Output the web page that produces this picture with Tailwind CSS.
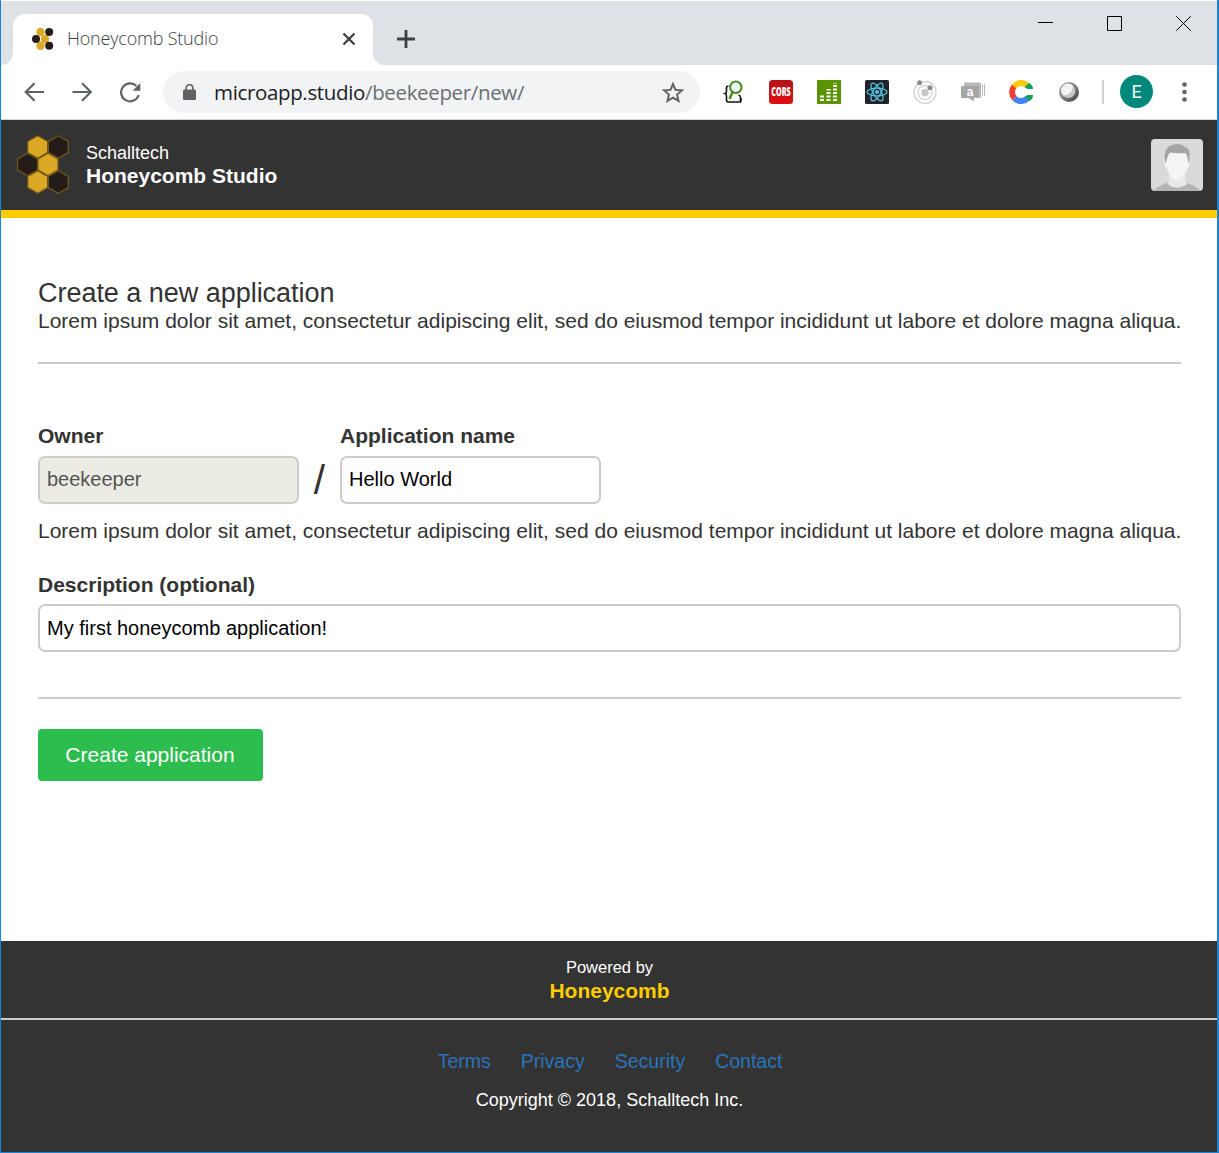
<!DOCTYPE html>
<html lang="en">
<head>
<meta charset="utf-8">
<title>Honeycomb Studio</title>
<script src="https://cdn.jsdelivr.net/npm/@tailwindcss/browser@4"></script>
</head>
<body class="bg-white">
<svg class="hidden">
  <defs>
    <symbol id="comb" viewBox="0 0 52 60">
      <g stroke="#725719" stroke-width="1.3">
        <path fill="#dca927" d="M20.7 .8 30.7 6.5V17.5L20.7 23.2 10.7 17.5V6.5z"/>
        <path fill="#231c19" d="M41.3 .8 51.3 6.5V17.5L41.3 23.2 31.3 17.5V6.5z"/>
        <path fill="#231c19" d="M10.6 18.3 20.6 24V35L10.6 40.7 .6 35V24z"/>
        <path fill="#dca927" d="M31 18.3 41 24V35L31 40.7 21 35V24z"/>
        <path fill="#dca927" d="M20.7 35.8 30.7 41.5V52.5L20.7 58.2 10.7 52.5V41.5z"/>
        <path fill="#231c19" d="M41.3 35.8 51.3 41.5V52.5L41.3 58.2 31.3 52.5V41.5z"/>
      </g>
    </symbol>
  </defs>
</svg>
<div class="flex h-[1153px] w-[1219px] flex-col overflow-hidden border-r-2 border-b border-l border-[#1883d7] bg-white pt-px font-['Liberation_Sans',Arial,sans-serif] text-[21px] leading-[28px] text-[#333]">

  <!-- Tab strip -->
  <div class="flex h-16 shrink-0 items-end bg-[#dee1e6]">
    <div class="h-3 w-3 bg-white"><div class="h-3 w-3 rounded-br-xl bg-[#dee1e6]"></div></div>
    <div class="flex h-[51px] w-[360px] items-center rounded-t-xl bg-white pr-[17px] pb-[2px] pl-[18px]">
      <svg class="h-6 w-6 shrink-0" viewBox="0 0 24 24">
        <g fill="#dca927"><circle cx="9.5" cy="5" r="4.2"/><circle cx="14" cy="12" r="4.2"/><circle cx="9.5" cy="18.7" r="4.2"/></g>
        <g fill="#231c19"><circle cx="18.2" cy="5" r="4"/><circle cx="5" cy="12" r="4"/><circle cx="18.2" cy="18.7" r="4"/></g>
      </svg>
      <span class="ml-3 flex-1 pb-[2px] font-['Open_Sans','Noto_Sans',sans-serif] text-[18px] font-[350] tracking-[-0.2px] whitespace-nowrap text-[#3c4043]">Honeycomb Studio</span>
      <svg class="h-[14px] w-[14px]" viewBox="0 0 14 14"><path d="M1.5 1.5 12.5 12.5M12.5 1.5 1.5 12.5" stroke="#3c4043" stroke-width="2.3"/></svg>
    </div>
    <div class="h-3 w-3 bg-white"><div class="h-3 w-3 rounded-bl-xl bg-[#dee1e6]"></div></div>
    <svg class="mb-[17px] ml-3 h-[18px] w-[18px]" viewBox="0 0 18 18"><path d="M9 0V18M0 9H18" stroke="#3c4043" stroke-width="2.8"/></svg>
    <div class="ml-auto flex h-16 items-start gap-[54px] pt-[15px] pr-[26px]">
      <svg class="h-[15px] w-[15px]" viewBox="0 0 15 15"><path d="M0 6.5H15" stroke="#000"/></svg>
      <svg class="h-[15px] w-[15px]" viewBox="0 0 15 15"><path d="M.5 .5H14.5V14.5H.5z" fill="none" stroke="#000"/></svg>
      <svg class="h-[15px] w-[15px]" viewBox="0 0 15 15"><path d="M.3 .3 14.7 14.7M14.7 .3 .3 14.7" stroke="#000"/></svg>
    </div>
  </div>

  <!-- Toolbar -->
  <div class="flex h-[55px] shrink-0 items-center border-b border-[#d2d4d6] bg-white pl-[22px]">
    <svg class="mb-px h-5 w-[22px]" viewBox="0 0 22 20" fill="none" stroke="#5f6368" stroke-width="2.2"><path d="M21 10H2.5M11.500 1.2 2.700 10 11.500 18.8"/></svg>
    <svg class="mb-px ml-[26px] h-5 w-[22px]" viewBox="0 0 22 20" fill="none" stroke="#5f6368" stroke-width="2.2"><path d="M1.5 10H19.5M11 1.2 19.8 10 11 18.8"/></svg>
    <svg class="mb-px ml-[26px] h-[22px] w-[22px]" viewBox="0 0 22 22"><path d="M19.700 14A9 9 0 1 1 17.5 5" fill="none" stroke="#5f6368" stroke-width="2.2"/><path d="M21.3 2V9.8H13.500z" fill="#5f6368"/></svg>
    <div class="ml-[22px] flex h-[42px] w-[537px] items-center rounded-full bg-[#f1f3f4] pr-[15px] pl-5">
      <svg class="h-4 w-[13px]" viewBox="0 0 13 16"><rect y="5.5" width="13" height="10.5" rx="1.5" fill="#5f6368"/><path d="M3.2 6V4a3.3 3.3 0 0 1 6.6 0V6" fill="none" stroke="#5f6368" stroke-width="1.6"/></svg>
      <span class="ml-[18px] flex-1 font-['Open_Sans','Noto_Sans',sans-serif] text-[20.5px] tracking-[-0.35px] whitespace-nowrap text-[#6b6f74]"><span class="text-[#202124]">microapp.studio</span>/beekeeper/new/</span>
      <svg class="h-[23px] w-6" viewBox="0 0 24 23"><path d="M12 3 14.5 8.9 20.9 9.4 16.1 13.6 17.5 19.9 12 16.6 6.5 19.9 7.9 13.6 3.1 9.4 9.5 8.9z" fill="none" stroke="#5f6368" stroke-width="2"/></svg>
    </div>
    <div class="ml-[21px] flex items-center gap-6">
      <svg class="h-6 w-6" viewBox="0 0 24 24"><path d="M7.500 6Q5.500 6 5.500 8V11.500Q5.500 13 4 13.500Q5.500 14 5.500 16V20Q5.500 22 7.500 22H19.500L20.500 18.500M19.500 21V17.500Q19.500 15.500 17.500 15" fill="none" stroke="#111" stroke-width="1.600"/><path d="M11.500 12 8.500 19" stroke="#4b8b22" stroke-width="2.600"/><circle cx="14.800" cy="7.200" r="5.700" fill="#edf5fb" stroke="#4b8b22" stroke-width="2"/></svg>
      <svg class="h-6 w-6" viewBox="0 0 24 24"><defs><linearGradient id="red" x2="0" y2="1"><stop stop-color="#b51218"/><stop offset=".6" stop-color="#cf1115"/><stop offset="1" stop-color="#e00b0d"/></linearGradient></defs><rect width="24" height="24" rx="3.500" fill="url(#red)"/><text x="12" y="16" text-anchor="middle" textLength="19.500" lengthAdjust="spacingAndGlyphs" font-family="Open Sans, sans-serif" font-weight="800" font-size="11.500" fill="#fff">CORS</text></svg>
      <svg class="h-6 w-6" viewBox="0 0 24 24"><path fill="#5a9400" d="M0 0H24V24H0z"/><path d="M5 21V15M11.500 21V9M18 21V3" stroke="#fff" stroke-width="4" stroke-dasharray="2 1.500"/></svg>
      <svg class="h-6 w-6" viewBox="0 0 24 24"><rect width="24" height="24" rx="1.500" fill="#20232a"/><g fill="none" stroke="#53c1de" stroke-width="1.300"><ellipse cx="12" cy="12" rx="10" ry="3.900"/><ellipse cx="12" cy="12" rx="10" ry="3.900" transform="rotate(60 12 12)"/><ellipse cx="12" cy="12" rx="10" ry="3.900" transform="rotate(120 12 12)"/></g><circle cx="12" cy="12" r="2.100" fill="#53c1de"/></svg>
      <svg class="h-6 w-6" viewBox="0 0 24 24" fill="none" stroke="#d5d5d5"><circle cx="12" cy="12.500" r="11" stroke-width="1.400"/><circle cx="12" cy="12.500" r="7" stroke-width="1.400"/><circle cx="12" cy="12.500" r="3.700" fill="#c8c8c8" stroke="none"/><circle cx="6.500" cy="2.700" r="2.500" fill="#8b8b8b" stroke="none"/><circle cx="17" cy="7.700" r="2.500" fill="#8b8b8b" stroke="none"/></svg>
      <svg class="h-6 w-6" viewBox="0 0 24 24"><path fill="#b8b8b8" d="M3 2.500H19Q20 2.500 20 3.500V17Q20 18 19 18H13V21.500L8 18H3zM21 5 22 4V16L21 15zM23 4 24 3.500V16L23 15.500z"/><path fill="#a6a6a6" d="M1 6H17Q18 6 18 7V17H12.500V21L8 18H1Q0 18 0 17V7Q0 6 1 6z"/><text x="9.200" y="15.500" text-anchor="middle" font-family="Liberation Sans, sans-serif" font-weight="700" font-size="12" fill="#fff">a</text></svg>
      <svg class="h-6 w-6" viewBox="0 0 24 24" fill="none" stroke-width="6"><path d="M4.800 6.800A9 9 0 0 1 18.500 5.700" stroke="#fbcb09"/><path d="M5 6.500A9 9 0 0 0 5.500 18.200" stroke="#ef4035"/><path d="M5.500 18.200A9 9 0 0 0 18.500 18.300" stroke="#3f82f3"/><path d="M15.500 7 20 3Q24 5 24 9H18.500zM15.500 17 18.500 15H24Q24 19 20.500 21z" fill="#18a05a" stroke="none"/></svg>
      <svg class="h-6 w-6" viewBox="0 0 24 24"><defs><linearGradient id="ring" x2="1" y2="1"><stop stop-color="#b1b1b1"/><stop offset=".5" stop-color="#808080"/><stop offset="1" stop-color="#393939"/></linearGradient></defs><circle cx="12" cy="12" r="10" fill="url(#ring)"/><circle cx="11.500" cy="11" r="6.900" fill="#c7c7c7"/><path d="M16 5.700A7 7 0 1 0 6 15.500Q15.500 15 16 5.700z" fill="#f3f3f3"/></svg>
    </div>
    <div class="ml-[21px] h-6 w-0.5 bg-[#d0d0d0]"></div>
    <div class="mb-px ml-4 flex h-[33px] w-[33px] items-center justify-center rounded-full bg-[#00897b] font-['Roboto',sans-serif] text-[18px] text-white">E</div>
    <svg class="mb-px ml-[29px] h-5 w-[5px]" viewBox="0 0 5 20" fill="#5f6368"><circle cx="2.500" cy="2.500" r="2.300"/><circle cx="2.500" cy="10" r="2.300"/><circle cx="2.500" cy="17.500" r="2.300"/></svg>
  </div>

  <!-- Site header -->
  <header class="flex h-[98px] shrink-0 items-center border-b-8 border-[#fc0] bg-[#333] pr-[14px] pl-4 text-white">
    <svg class="h-[60px] w-[52px]"><use href="#comb"/></svg>
    <div class="ml-[17px]">
      <div class="text-[18px] leading-[22px]">Schalltech</div>
      <div class="font-bold leading-6">Honeycomb Studio</div>
    </div>
    <svg class="ml-auto h-[52px] w-[52px] rounded-[4px]" viewBox="0 0 52 52">
      <path fill="#d9d9d9" d="M0 0H52V52H0z"/>
      <path fill="#b5b5b5" d="M2 52Q8 46.500 17 43.500L35 43.500Q45 46.500 50 52z"/>
      <path fill="#e9e9e9" d="M18 34H34V42.500Q37 44 35.500 45.500Q31 48.500 26 48.500Q20 48.500 17 45Q16 44 18 42.500z"/>
      <path fill="#f4f4f4" d="M15.500 15 20 11H33L37 15 38.500 24Q38.500 27.500 36.500 29Q33.500 40.500 26 41Q19 40.500 15.700 29Q13.300 27 13.300 23z"/>
      <path fill="#a5a5a5" d="M15 25Q12.500 18 14.500 12Q17 5.500 26 5Q31 5 33.500 8Q38 8.500 38.500 14Q39.300 19 37.500 25Q36.800 17 34.500 14Q27 14.800 19 13.500Q16 17 15 25z"/>
    </svg>
  </header>

  <!-- New application form -->
  <main class="flex h-[723px] shrink-0 flex-col items-start pt-[60px] pr-[36px] pl-[37px]">
    <h1 class="text-[27px] leading-[30px] tracking-[-0.03px]">Create a new application</h1>
    <p class="leading-[26px] tracking-[-0.005px] whitespace-nowrap">Lorem ipsum dolor sit amet, consectetur adipiscing elit, sed do eiusmod tempor incididunt ut labore et dolore magna aliqua.</p>
    <div class="mt-7 h-0.5 w-full shrink-0 bg-[#ccc]"></div>
    <div class="mt-[58px] flex">
      <div class="w-[261px]">
        <label class="block font-bold">Owner</label>
        <div class="mt-[6px] flex h-12 items-center rounded-[7px] border-2 border-[#ccc] bg-[#ebebe4] px-[7px] pb-[2px] text-[20px] text-[#545454]">beekeeper</div>
      </div>
      <div class="flex w-[41px] justify-center pt-[38px] text-[40.5px] leading-[40px]">/</div>
      <div class="w-[261px]">
        <label class="block font-bold">Application name</label>
        <div class="mt-[6px] flex h-12 items-center rounded-[7px] border-2 border-[#ccc] px-[7px] pb-[2px] text-[20px] text-black">Hello World</div>
      </div>
    </div>
    <p class="mt-[13px] tracking-[-0.005px] whitespace-nowrap">Lorem ipsum dolor sit amet, consectetur adipiscing elit, sed do eiusmod tempor incididunt ut labore et dolore magna aliqua.</p>
    <label class="mt-[26px] block font-bold">Description (optional)</label>
    <div class="mt-[5px] flex h-12 w-full items-center rounded-[7px] border-2 border-[#ccc] px-[7px] text-[20px] text-black">My first honeycomb application!</div>
    <div class="mt-[45px] h-0.5 w-full shrink-0 bg-[#ccc]"></div>
    <div class="mt-[30px] flex h-[52px] w-[225px] items-center justify-center rounded-[4px] bg-[#2dbd4e] pr-px text-white">Create application</div>
  </main>

  <!-- Footer -->
  <footer class="flex flex-1 flex-col items-center bg-[#333] text-white">
    <div class="flex h-[79px] w-full shrink-0 flex-col items-center border-b-2 border-[#ccc] pt-[15px] pl-px">
      <div class="text-[16.5px] leading-[22px]">Powered by</div>
      <div class="mt-px font-bold leading-6 text-[#fc0]">Honeycomb</div>
    </div>
    <nav class="mt-7 flex gap-[30px] pl-[2px] text-[19.5px] leading-[26px] text-[#2a73bb]"><a>Terms</a><a>Privacy</a><a>Security</a><a>Contact</a></nav>
    <div class="mt-[14px] pl-px text-[18px] leading-[24px]">Copyright © 2018, Schalltech Inc.</div>
  </footer>
</div>
</body>
</html>
